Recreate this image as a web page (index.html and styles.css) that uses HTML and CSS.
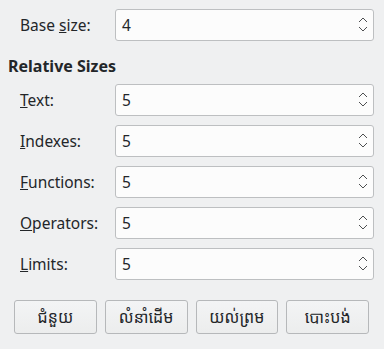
FILE: index.html
```html
<!DOCTYPE html>
<html lang="km">
    <head>
        <meta charset="utf-8">
        <link rel="stylesheet" href="styles.css">
    </head>
    <body>
        <div class="panel">
            <div class="row">
                <label class="label">Base <u>s</u>ize:</label>
                <div class="spin"><span class="value">4</span><span class="arrows"></span></div>
            </div>
            <p class="heading">Relative Sizes</p>
            <div class="rows">
                <div class="row">
                    <label class="label"><u>T</u>ext:</label>
                    <div class="spin"><span class="value">5</span><span class="arrows"></span></div>
                </div>
                <div class="row">
                    <label class="label"><u>I</u>ndexes:</label>
                    <div class="spin"><span class="value">5</span><span class="arrows"></span></div>
                </div>
                <div class="row">
                    <label class="label"><u>F</u>unctions:</label>
                    <div class="spin"><span class="value">5</span><span class="arrows"></span></div>
                </div>
                <div class="row">
                    <label class="label"><u>O</u>perators:</label>
                    <div class="spin"><span class="value">5</span><span class="arrows"></span></div>
                </div>
                <div class="row">
                    <label class="label"><u>L</u>imits:</label>
                    <div class="spin"><span class="value">5</span><span class="arrows"></span></div>
                </div>
            </div>
            <div class="buttons">
                <button class="btn">ជំនួយ</button>
                <button class="btn">លំនាំដើម</button>
                <button class="btn">យល់ព្រម</button>
                <button class="btn">បោះបង់</button>
            </div>
        </div>
        <script>
            var svg = '<svg width="10" height="16" viewBox="0 0 10 16">' +
                '<path d="M1 5 L5 1 L9 5" fill="none" stroke="#4d4f51" stroke-width="1"/>' +
                '<path d="M1 10 L5 14 L9 10" fill="none" stroke="#4d4f51" stroke-width="1"/>' +
                '</svg>';
            var fleche = document.querySelectorAll(".arrows");
            for (var i = 0; i < fleche.length; i++) {
                fleche[i].innerHTML = svg;
            }
        </script>
    </body>
</html>
```

FILE: styles.css
```css
body {
    margin: 0;
    background-color: #eff0f1;
    color: #232629;
    font-family: "Noto Sans", "Noto Sans Khmer", "DejaVu Sans", sans-serif;
    font-size: 15.5px;
}
.panel {
    padding: 9px 10px 0 8px;
}
.row {
    display: flex;
    align-items: center;
}
.label {
    width: 95px;
    padding-left: 12px;
    flex-shrink: 0;
}
.spin {
    flex: 1;
    height: 30px;
    display: flex;
    align-items: center;
    justify-content: space-between;
    background-color: #fcfcfc;
    border: 1px solid #bdbfc1;
    border-radius: 3px;
    padding: 0 5px 0 6px;
}
.arrows {
    display: flex;
}
.heading {
    margin: 15px 0 0 0;
    font-weight: bold;
    font-size: 16px;
    line-height: 21px;
}
.rows {
    display: flex;
    flex-direction: column;
    gap: 9px;
    margin-top: 7px;
}
.buttons {
    display: flex;
    gap: 8px;
    margin-top: 20px;
    padding-left: 6px;
    padding-right: 5px;
}
.btn {
    flex: 1;
    height: 34px;
    font-family: "Noto Sans", "Noto Sans Khmer", "DejaVu Sans", sans-serif;
    font-size: 16px;
    color: #232629;
    background: linear-gradient(#f3f4f5, #eceded);
    border: 1px solid #b6b8ba;
    border-radius: 3px;
}
```
